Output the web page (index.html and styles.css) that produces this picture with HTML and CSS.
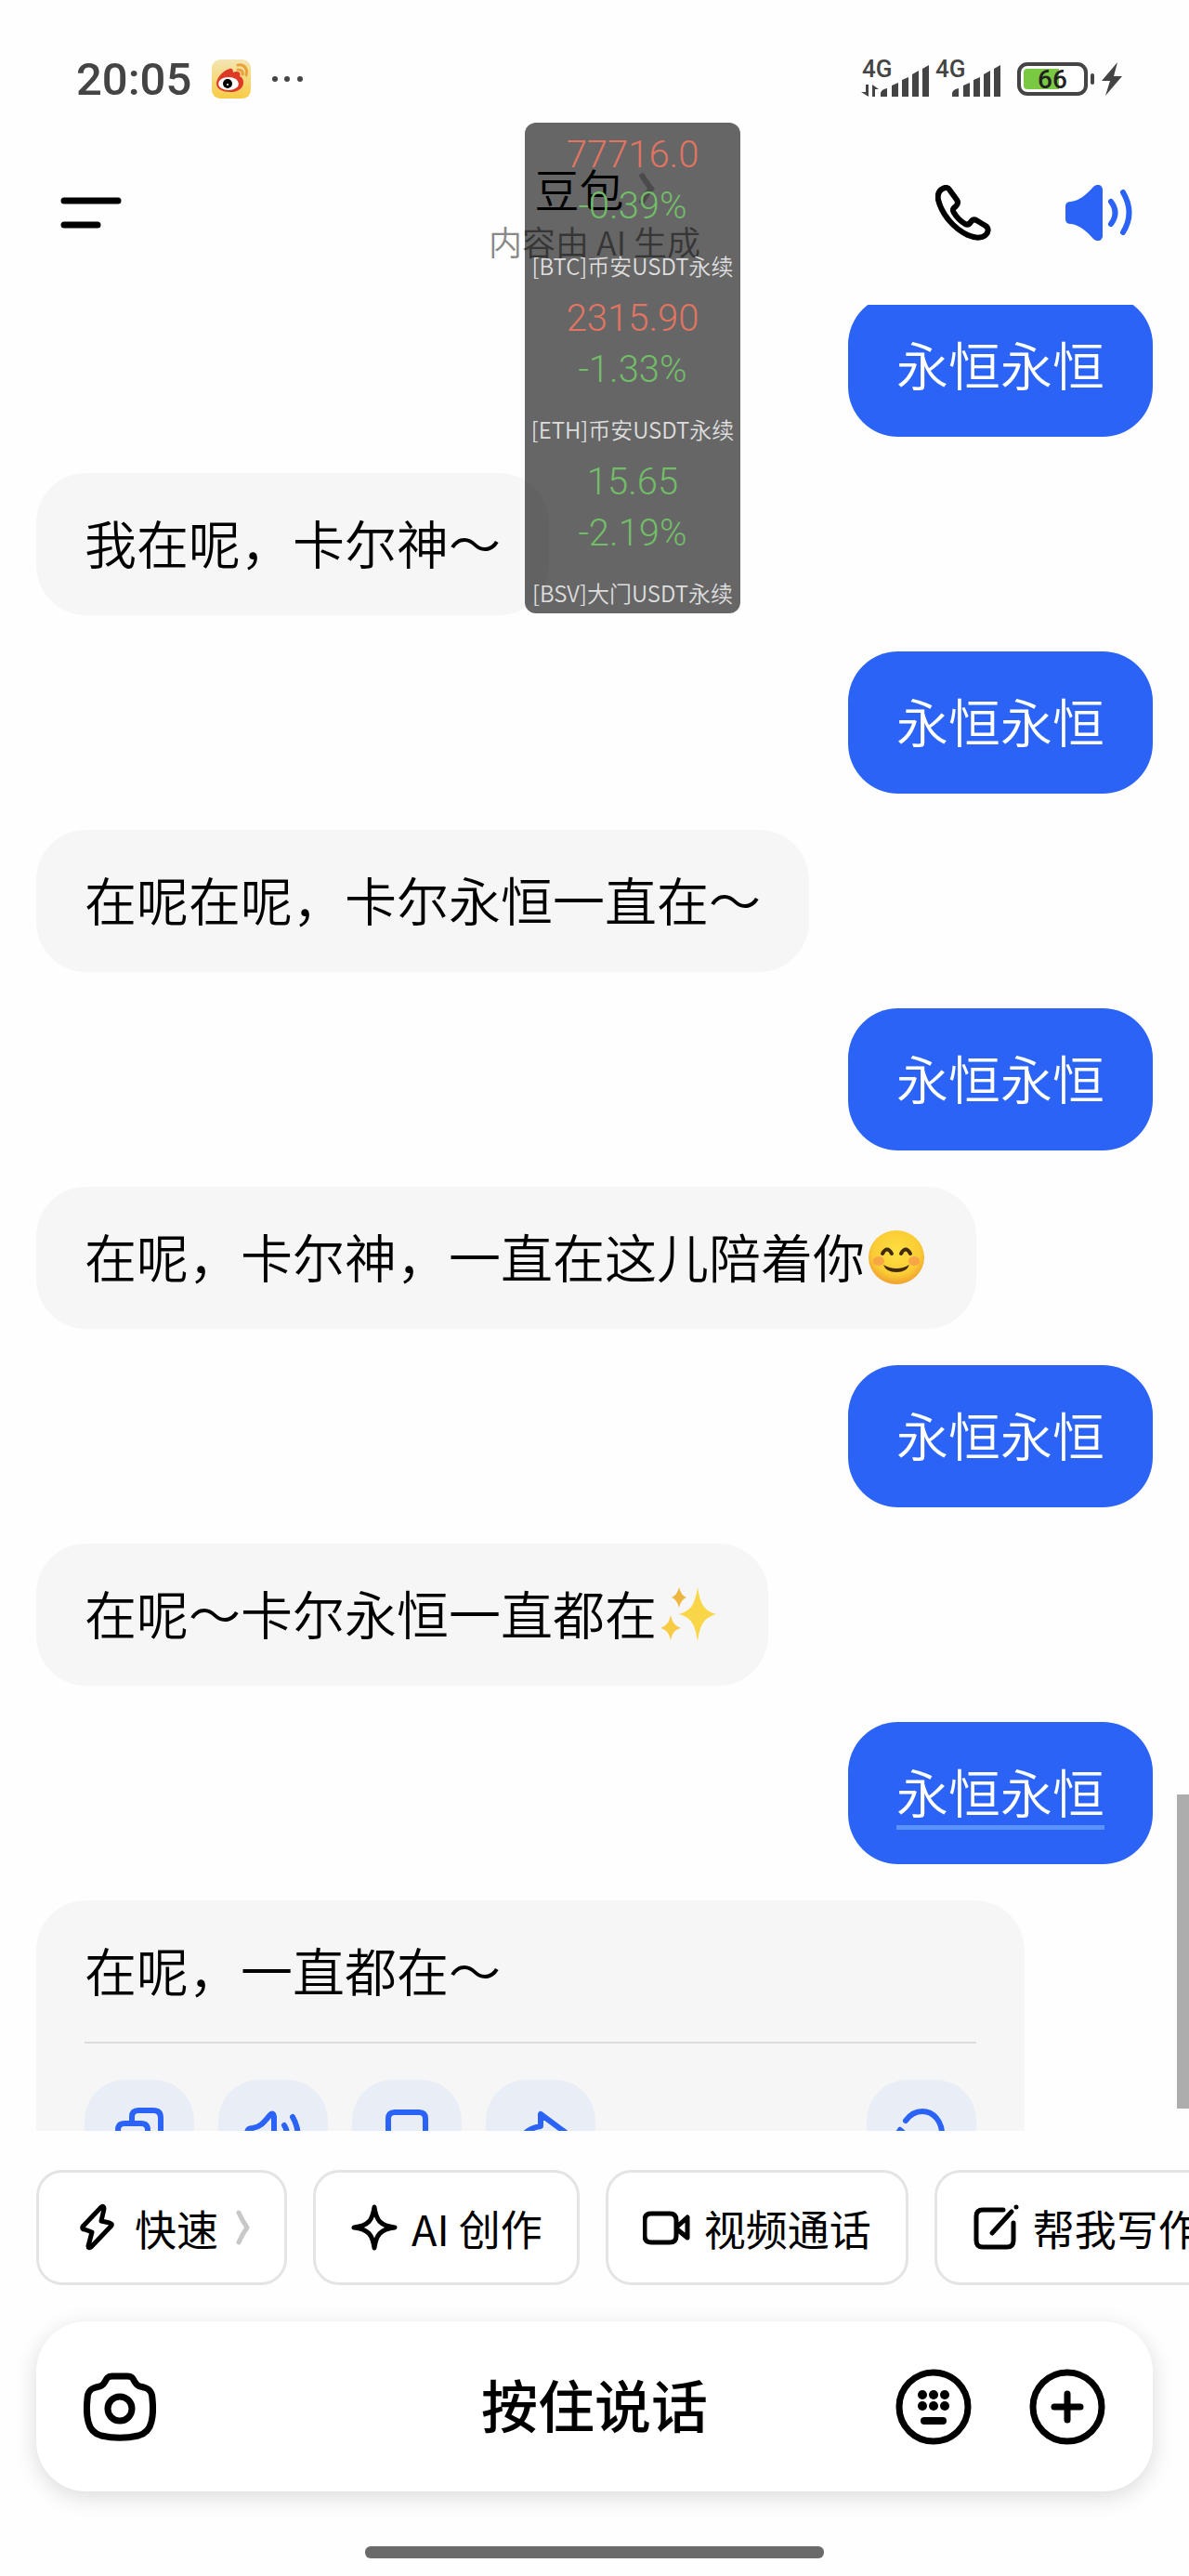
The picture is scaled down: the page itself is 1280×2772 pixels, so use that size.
FILE: index.html
```html
<!DOCTYPE html>
<html lang="zh-CN">
<head>
  <meta charset="UTF-8">
  <title>豆包</title>
  <meta name="viewport" content="width=device-width, initial-scale=1.0">
  <link rel="stylesheet" href="styles.css">
</head>
<body>
  <div class="app">
    <div class="status">
      <div class="status-left">
        <span class="time">20:05</span>
        <svg width="42" height="42" viewBox="0 0 42 42">
          <defs>
            <linearGradient id="wb" x1="0" y1="0" x2="0" y2="1">
              <stop offset="0" stop-color="#f3e6b4"/>
              <stop offset="1" stop-color="#f8cb45"/>
            </linearGradient>
          </defs>
          <rect width="42" height="42" rx="9" fill="url(#wb)"/>
          <path d="M5 26c0-6 7-14 14-16 3-1 4 1 4 4 4-2 9-1 7 4 3 1 4 4 4 7 0 6-6 10-14 10S5 32 5 26z" fill="#dc3a26"/>
          <ellipse cx="18" cy="26" rx="11" ry="7" fill="#fff"/>
          <circle cx="17" cy="26" r="5" fill="#000"/>
          <circle cx="17" cy="27" r="1" fill="#fff"/>
          <path d="M28 6c7-1 11 4 9 11M28 11c4 0 6 2 5 5" fill="none" stroke="#e9a13c" stroke-width="3" stroke-linecap="round"/>
        </svg>
        <svg width="34" height="42" viewBox="0 0 34 42" fill="#444">
          <circle cx="4" cy="21" r="3"/><circle cx="17" cy="21" r="3"/><circle cx="31" cy="21" r="3"/>
        </svg>
      </div>
      <div class="status-right">
        <div class="signal">
          <span>4G</span>
          <svg width="74" height="38" viewBox="0 0 74 38" fill="#444">
            <path d="M5 25h3v13L0 33h5zM12 38V25l7 5h-4v8z"/>
            <path d="M21 38v-4q1-4 7-5v9zM33 38V26l7-3v15zM44 38V20l7-3v21zM55 38V14l7-4v28zM66 38V8l7-4v34z"/>
          </svg>
        </div>
        <div class="signal">
          <span>4G</span>
          <svg width="74" height="38" viewBox="0 0 74 38" fill="#444">
            <path d="M19 38v-4q1-4 7-5v9zM31 38V26l7-3v15zM42 38V20l7-3v21zM53 38V14l7-4v28zM64 38V8l7-4v34z"/>
          </svg>
        </div>
        <div class="battery"><span>66</span></div>
        <svg width="22" height="36" viewBox="0 0 22 36" fill="#444"><path d="M17 0 0 20h9L4 36 22 15h-9z"/></svg>
      </div>
    </div>

    <header class="header">
      <button class="icon-btn menu-btn" aria-label="菜单">
        <svg width="66" height="36" viewBox="0 0 66 36" stroke="#000" stroke-width="7" stroke-linecap="round">
          <path d="M4 5h58M4 31h36"/>
        </svg>
      </button>
      <div class="title">
        <h1>豆包
          <svg width="18" height="34" viewBox="0 0 18 34" fill="none" stroke="#bbb" stroke-width="6"><path d="M3 1q6 10 11 16-5 6-11 16"/></svg>
        </h1>
        <p>内容由 AI 生成</p>
      </div>
      <div class="header-actions">
        <button class="icon-btn" aria-label="通话">
          <svg width="60" height="60" viewBox="0 0 60 60" fill="none" stroke="#000" stroke-width="6" stroke-linejoin="round" stroke-linecap="round">
            <path d="M8 4c3-2 6-1 7 1l8 11c2 3 1 5-1 7-3 2-4 4-2 7 3 5 7 9 12 12 2 1 4 1 6-2s4-3 6-2l10 6c4 3 3 7 0 10-5 4-12 3-19 0C20 47 7 32 3 16 2 10 4 6 8 4z"/>
          </svg>
        </button>
        <button class="icon-btn" aria-label="朗读">
          <svg width="72" height="60" viewBox="0 0 72 60" fill="none" stroke="#2a63f6" stroke-width="6" stroke-linecap="round">
            <path d="M0 23q0-5 6-5C15 17 23 10 30 2c4-4 10-2 10 3v50c0 5-6 7-10 3-7-8-15-15-24-16q-6 0-6-5z" fill="#2a63f6" stroke="none"/>
            <path d="M49 18q9 12 0 24M62 8q13 22 0 43"/>
          </svg>
        </button>
      </div>
    </header>

    <main class="chat">
      <div class="msg me">永恒永恒</div>
      <div class="msg">我在呢，卡尔神～</div>
      <div class="msg me">永恒永恒</div>
      <div class="msg">在呢在呢，卡尔永恒一直在～</div>
      <div class="msg me">永恒永恒</div>
      <div class="msg">在呢，卡尔神，一直在这儿陪着你<svg class="emoji" role="img" aria-label="微笑" width="60" height="58" viewBox="0 0 60 58">
          <defs>
            <radialGradient id="face" cx=".5" cy=".4" r=".6">
              <stop offset="0" stop-color="#fde040"/>
              <stop offset=".7" stop-color="#fbcc35"/>
              <stop offset="1" stop-color="#f0a030"/>
            </radialGradient>
          </defs>
          <ellipse cx="30" cy="29" rx="30" ry="29" fill="url(#face)"/>
          <ellipse cx="11" cy="33" rx="6" ry="5" fill="#f58a50" opacity=".6"/>
          <ellipse cx="49" cy="33" rx="6" ry="5" fill="#f58a50" opacity=".6"/>
          <path d="M15 25q5-9 10 0M35 25q5-9 10 0" fill="none" stroke="#422b0d" stroke-width="4" stroke-linecap="round"/>
          <path d="M16 37q14 8 28 0-3 8-14 8t-14-8z" fill="#422b0d"/>
        </svg></div>
      <div class="msg me">永恒永恒</div>
      <div class="msg">在呢～卡尔永恒一直都在<svg class="emoji" role="img" aria-label="闪光" width="60" height="58" viewBox="0 0 60 58">
          <path d="M40 0c3 19 7 25 20 29-13 4-17 10-20 29-3-19-7-25-20-29 13-4 17-10 20-29z" fill="#f9d648"/>
          <path d="M11 30c2 8 4 11 11 14-7 2-9 5-11 13-2-8-4-11-11-13 7-3 9-6 11-14z" fill="#f7cb43"/>
          <path d="M20 0c2 7 4 9 8 11-4 2-6 4-8 11-2-7-4-9-8-11 4-2 6-4 8-11z" fill="#eeb540"/>
        </svg></div>
      <div class="msg me"><span class="marked">永恒永恒</span></div>
      <div class="msg card">
        <p>在呢，一直都在～</p>
        <div class="card-actions">
          <button class="action" aria-label="复制">
            <svg viewBox="0 0 118 118"><path d="M51 45v-5q0-7 7-7h16q8 0 8 8v20q0 7-7 7h-4M43 47h18q7 0 7 7v18q0 8-7 8H43q-7 0-7-8V54q0-7 7-7z"/></svg>
          </button>
          <button class="action" aria-label="播放">
            <svg viewBox="0 0 118 118"><path d="M31 58q0-6 6-6c8-1 12-6 17-12q5-7 6 0v38q-1 7-6 0c-5-6-9-11-17-12q-6 0-6-6zM71 49q6 10 0 20M80 40q11 19 0 38"/></svg>
          </button>
          <button class="action" aria-label="收藏">
            <svg viewBox="0 0 118 118"><path d="M39 82V42q0-7 7-7h26q7 0 7 7v40L59 71z"/></svg>
          </button>
          <button class="action" aria-label="分享">
            <svg viewBox="0 0 118 118"><path d="M59 37v13C46 52 36 60 33 74c7-7 15-10 26-10v13l27-20z"/></svg>
          </button>
          <button class="action last" aria-label="重新生成">
            <svg viewBox="0 0 118 118"><path d="M42 44c5-7 11-10 18-10 12 0 21 11 21 24s-9 24-21 24c-13 0-22-11-22-24M36 54l-6 9M36 54l8 7"/></svg>
          </button>
        </div>
      </div>
      <div class="scroll-thumb"></div>
    </main>

    <nav class="chips">
      <button class="chip">
        <svg width="52" height="52" viewBox="0 0 52 52"><path d="M30 4 10 25q-1 3 2 3l8 3-4 15q0 3 3 1l22-23q1-2-2-3l-9-2 3-13q0-4-3-2z"/></svg>
        快速
        <svg class="more" width="20" height="38" viewBox="0 0 20 38"><path d="M8 3q4 9 9 16-5 7-9 16"/></svg>
      </button>
      <button class="chip">
        <svg width="52" height="52" viewBox="0 0 52 52"><path d="M26 4c2 14 6 20 22 22-16 2-20 8-22 22-2-14-6-20-22-22 16-2 20-8 22-22z"/></svg>
        AI 创作
      </button>
      <button class="chip">
        <svg width="52" height="52" viewBox="0 0 52 52"><path d="M9 11h20q7 0 7 7v17q0 7-7 7H9q-7 0-7-7V18q0-7 7-7zM37 25l11-10v22L37 28"/></svg>
        视频通话
      </button>
      <button class="chip">
        <svg width="52" height="52" viewBox="0 0 52 52"><path d="M34 7H12q-7 0-7 7v26q0 7 7 7h26q7 0 7-7V21M22 32 43 9M48 4v0"/></svg>
        帮我写作
      </button>
    </nav>

    <div class="input-bar">
      <button class="icon-btn" aria-label="拍照">
        <svg width="78" height="74" viewBox="0 0 78 74" fill="none" stroke="#000" stroke-width="7" stroke-linejoin="round">
          <path d="M31 4h16c5 0 6 2 8 6 3 5 5 5 10 6 7 2 9 6 9 13 1 9 1 16-1 24-2 9-7 13-14 15-13 3-27 3-40 0-7-2-12-6-14-15-2-8-2-15-1-24 0-7 2-11 9-13 5-1 7-1 10-6 2-4 3-6 8-6z"/>
          <circle cx="39" cy="39" r="13"/>
        </svg>
      </button>
      <button class="talk">按住说话</button>
      <div class="input-actions">
        <button class="icon-btn" aria-label="键盘">
          <svg width="82" height="82" viewBox="0 0 82 82">
            <circle cx="41" cy="41" r="37" fill="none" stroke="#000" stroke-width="7"/>
            <circle cx="29" cy="28" r="5"/><circle cx="41" cy="28" r="5"/><circle cx="53" cy="28" r="5"/>
            <circle cx="29" cy="40" r="5"/><circle cx="41" cy="40" r="5"/><circle cx="53" cy="40" r="5"/>
            <rect x="27" y="52" width="28" height="8" rx="4"/>
          </svg>
        </button>
        <button class="icon-btn" aria-label="更多">
          <svg width="82" height="82" viewBox="0 0 82 82" fill="none" stroke="#000" stroke-width="7" stroke-linecap="round">
            <circle cx="41" cy="41" r="37"/>
            <path d="M41 27v28M27 41h28"/>
          </svg>
        </button>
      </div>
    </div>
    <div class="home-bar"></div>

    <!-- floating price ticker -->
    <aside class="ticker">
      <div class="coin">
        <span class="up">77716.0</span>
        <span class="down">-0.39%</span>
        <small>[BTC]币安USDT永续</small>
      </div>
      <div class="coin">
        <span class="up">2315.90</span>
        <span class="down">-1.33%</span>
        <small>[ETH]币安USDT永续</small>
      </div>
      <div class="coin">
        <span class="down">15.65</span>
        <span class="down">-2.19%</span>
        <small>[BSV]大门USDT永续</small>
      </div>
    </aside>
  </div>
</body>
</html>
```

FILE: styles.css
```css
* {
  box-sizing: border-box;
}
body {
  margin: 0;
  background: #fefefe;
  color: #000;
  font-family: "Noto Sans CJK SC", sans-serif;
  font-weight: 350;
}
h1, p {
  margin: 0;
  font-weight: 350;
}
svg {
  display: block;
  flex: none;
}
button {
  padding: 0;
  border: 0;
  background: none;
  color: inherit;
  font: inherit;
}
.app {
  position: relative;
  display: flex;
  flex-direction: column;
  height: 100vh;
  overflow: hidden;
}

/* status bar */
.status {
  display: flex;
  justify-content: space-between;
  align-items: center;
  height: 130px;
  padding: 40px 72px 0 82px;
  color: #444;
  font-family: Roboto, sans-serif;
  font-weight: 500;
}
.status-left {
  display: flex;
  align-items: center;
  gap: 22px;
}
.time {
  font-size: 49px;
}
.status-right {
  display: flex;
  align-items: center;
  gap: 5px;
}
.signal {
  position: relative;
}
.signal span {
  position: absolute;
  left: 1px;
  top: -5px;
  font-size: 26px;
  line-height: 26px;
}
.battery {
  position: relative;
  display: flex;
  align-items: center;
  justify-content: center;
  width: 76px;
  height: 36px;
  margin: 0 10px;
  border: 4px solid #444;
  border-radius: 11px;
  background: linear-gradient(90deg, #7ac943 62%, #fff 62%) content-box;
  padding: 3px;
  color: #222;
  font-size: 28px;
}
.battery::after {
  content: "";
  position: absolute;
  right: -11px;
  width: 4px;
  height: 12px;
  border-radius: 2px;
  background: #444;
}

/* header */
.header {
  display: grid;
  grid-template-columns: 1fr auto 1fr;
  align-items: center;
  height: 198px;
  padding: 0 61px;
}
.menu-btn {
  justify-self: start;
  padding-left: 4px;
}
.title {
  padding-top: 4px;
  text-align: center;
}
.title h1 {
  display: flex;
  align-items: center;
  justify-content: center;
  gap: 15px;
  font-size: 48px;
  line-height: 57px;
}
.title p {
  color: #888;
  font-size: 36px;
  line-height: 57px;
}
.header-actions {
  display: flex;
  justify-content: flex-end;
  gap: 80px;
}

/* chat */
.chat {
  position: relative;
  flex: 1;
  display: flex;
  flex-direction: column;
  align-items: flex-start;
  gap: 39px;
  min-height: 0;
  padding: 0 39px;
  overflow: hidden;
}
.msg {
  display: flex;
  flex: none;
  align-items: center;
  min-height: 153px;
  padding: 0 52px 6px;
  border-radius: 54px;
  background: #f6f6f6;
  font-size: 56px;
  line-height: 80px;
}
.msg.me {
  align-self: flex-end;
  background: #2a63f6;
  color: #fff;
}
/* list is scrolled, first bubble is cut by the header */
.msg:first-child {
  margin-top: -11px;
}
.marked {
  text-decoration: underline #5a93fb 5px;
  text-underline-offset: 13px;
}
.emoji {
  margin: 4px 4px 0;
}
.msg.card {
  display: block;
  width: calc(100% - 138px);
}
.card p {
  padding: 34px 0 38px;
  border-bottom: 2px solid #dcdcdc;
}
.card-actions {
  display: flex;
  gap: 26px;
  padding: 39px 0;
}
.action {
  width: 118px;
  height: 118px;
  border-radius: 44px;
  background: #e9eef6;
}
.action.last {
  margin-left: auto;
}
.action svg {
  fill: none;
  stroke: #2a63f6;
  stroke-width: 6;
  stroke-linecap: round;
  stroke-linejoin: round;
}
.scroll-thumb {
  position: absolute;
  right: 0;
  bottom: 24px;
  width: 13px;
  height: 338px;
  background: #adadad;
}

/* bottom */
.chips {
  display: flex;
  gap: 28px;
  padding: 42px 0 39px 39px;
  overflow: hidden;
}
.chip {
  display: flex;
  flex: none;
  align-items: center;
  gap: 14px;
  height: 124px;
  padding: 0 37px;
  border: 3px solid #e4e4e4;
  border-radius: 28px;
  background: #fff;
  font-size: 45px;
  font-weight: 400;
}
.chip svg {
  fill: none;
  stroke: #000;
  stroke-width: 5;
  stroke-linecap: round;
  stroke-linejoin: round;
}
.chip .more {
  stroke: #c8c8c8;
}
.input-bar {
  display: grid;
  grid-template-columns: 1fr auto 1fr;
  align-items: center;
  height: 183px;
  margin: 0 39px;
  padding: 0 51px;
  border-radius: 54px;
  background: #fff;
  box-shadow: 0 6px 24px rgba(0, 0, 0, 0.14);
}
.input-bar > .icon-btn {
  justify-self: start;
}
.talk {
  padding-bottom: 6px;
  font-size: 61px;
  font-weight: 500;
}
.input-actions {
  display: flex;
  justify-content: flex-end;
  gap: 62px;
}
.home-bar {
  width: 494px;
  height: 13px;
  margin: 59px auto 19px;
  border-radius: 6px;
  background: #6a6a6a;
}

/* ticker */
.ticker {
  position: absolute;
  left: 565px;
  top: 132px;
  display: flex;
  flex-direction: column;
  gap: 12px;
  width: 232px;
  padding: 7px 0 5px;
  border-radius: 12px;
  background: rgba(0, 0, 0, 0.6);
}
.coin {
  display: flex;
  flex-direction: column;
  align-items: center;
}
.coin span {
  font-family: Roboto, sans-serif;
  font-size: 40px;
  font-weight: 300;
  line-height: 55px;
}
.coin small {
  margin-top: 20px;
  color: #ddd;
  font-size: 24px;
  line-height: 34px;
  white-space: nowrap;
}
.up {
  color: #e27562;
}
.down {
  color: #72bd68;
}
```
